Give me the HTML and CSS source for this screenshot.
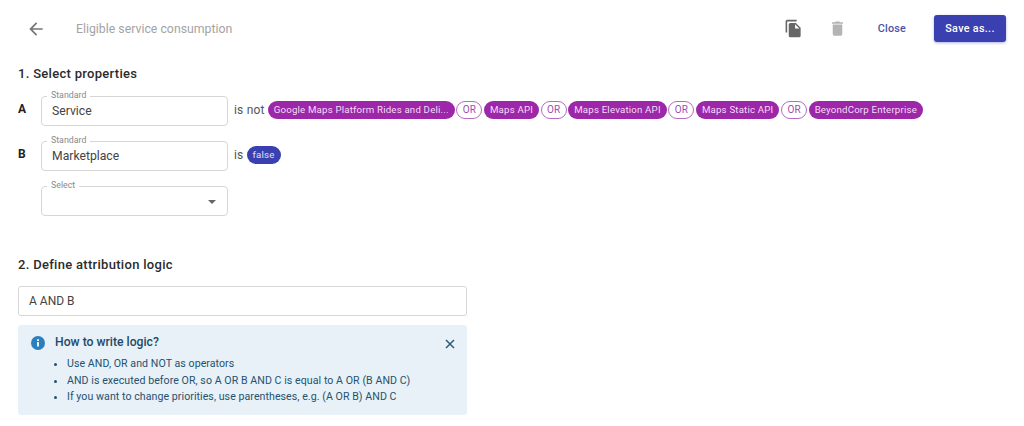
FILE: index.html
```html
<!DOCTYPE html>
<html lang="en">
<head>
<meta charset="utf-8">
<title>Eligible service consumption</title>
<link rel="stylesheet" href="styles.css">
</head>
<body>
<header class="top">
  <svg class="back" width="24" height="24" viewBox="0 0 24 24"><path d="M20 11H7.830l5.590-5.590L12 4l-8 8 8 8 1.410-1.410L7.830 13H20z"/></svg>
  <span class="title">Eligible service consumption</span>
  <svg class="ico-copy" width="24" height="24" viewBox="0 0 24 24"><path d="M16 1H4a2 2 0 0 0-2 2v14h2V3h12zm-1 4 6 6v10a2 2 0 0 1-2 2H8a2 2 0 0 1-2-2V7a2 2 0 0 1 2-2zm-1 7h5.500L14 6.500z"/></svg>
  <svg class="ico-trash" width="24" height="24" viewBox="0 0 24 24"><path d="M6 19a2 2 0 0 0 2 2h8a2 2 0 0 0 2-2V7H6zM19 4h-3.500l-1-1h-5l-1 1H5v2h14z"/></svg>
  <span class="close">Close</span>
  <span class="save">Save as...</span>
</header>
<main class="content">
  <h2 class="h1st">1. Select properties</h2>
  <div class="row">
    <b class="letter">A</b>
    <div class="field"><span class="lab">Standard</span>Service</div>
    <span class="op">is not</span>
    <div class="chips">
      <span class="chip">Google Maps Platform Rides and Deli...</span><span class="or">OR</span>
      <span class="chip">Maps API</span><span class="or">OR</span>
      <span class="chip">Maps Elevation API</span><span class="or">OR</span>
      <span class="chip">Maps Static API</span><span class="or">OR</span>
      <span class="chip">BeyondCorp Enterprise</span>
    </div>
  </div>
  <div class="row">
    <b class="letter">B</b>
    <div class="field"><span class="lab">Standard</span>Marketplace</div>
    <span class="op">is</span>
    <span class="chip blue">false</span>
  </div>
  <div class="row">
    <b class="letter"></b>
    <div class="field"><span class="lab">Select</span><span class="caret"></span></div>
  </div>
  <h2 class="h2nd">2. Define attribution logic</h2>
  <div class="logic">A AND B</div>
  <section class="info">
    <svg class="i" width="16" height="16" viewBox="0 0 16 16"><circle cx="8" cy="8" r="7"/><path class="i-w" d="M7.100 7h1.800v4.500H7.100zM7.100 4.200h1.800V6H7.100z"/></svg>
    <div class="info-body">
      <div class="info-title">How to write logic?</div>
      <ul>
        <li>Use AND, OR and NOT as operators</li>
        <li>AND is executed before OR, so A OR B AND C is equal to A OR (B AND C)</li>
        <li>If you want to change priorities, use parentheses, e.g. (A OR B) AND C</li>
      </ul>
    </div>
    <svg class="x" width="12" height="12" viewBox="0 0 12 12"><path d="M2 2l8 8M10 2l-8 8"/></svg>
  </section>
</main>
</body>
</html>
```
FILE: styles.css
```css
* { box-sizing: border-box; }
html, body { margin: 0; height: 426px; overflow: hidden; background: #fff; }
body { font-family: Roboto, sans-serif; color: #333; }

.top { display: flex; align-items: center; height: 27px; margin-top: 15px; padding: 0 18px 0 26px; }
.back { fill: #757575; flex: none; width: 20px; height: 20px; }
.title { font-size: 12.300px; color: #a3a3a3; margin-left: 30px; flex: 1; }
.ico-copy { fill: #666; width: 19px; height: 19px; margin-right: 25px; }
.ico-trash { fill: #b4b4b4; width: 19px; height: 19px; margin-right: 31px; }
.close { font-size: 10.800px; font-weight: 500; color: #4a54a8; margin-right: 28px; letter-spacing: .2px; }
.save { display: flex; align-items: center; justify-content: center; width: 72px; height: 27px; background: #3a40b0; color: #fff; border-radius: 3px; font-size: 10.800px; font-weight: 500; letter-spacing: .3px; box-shadow: 0 1px 3px rgba(58,64,176,.4); }

.content { padding: 0 18px; }
h2 { margin: 0; font-size: 13px; font-weight: 500; color: #2b2b2b; line-height: 16px; letter-spacing: .3px; }
.h1st { margin-top: 24px; margin-bottom: 14px; }
.h2nd { margin-top: 41px; margin-bottom: 13px; }

.row { display: flex; align-items: center; height: 30px; margin-bottom: 15px; }
.letter { width: 23px; margin-bottom: 4px; font-size: 12px; font-weight: 700; color: #222; }
.field { position: relative; width: 187px; height: 30px; flex: none; border: 1px solid #d6d6d6; border-radius: 4px; padding: 0 10px; font-size: 12.200px; line-height: 28px; color: #444; }
.lab { position: absolute; left: 5px; top: -7px; padding: 0 4px; background: #fff; font-size: 8.800px; line-height: 10px; color: #8a8a8a; }
.caret { position: absolute; right: 11px; top: 13px; border: 4px solid transparent; border-top: 4px solid #666; border-bottom: 0; }
.op { margin: 0 3px 3px 6px; font-size: 12px; letter-spacing: .2px; color: #555; }
.chips { display: flex; align-items: center; gap: .6px; margin-bottom: 3px; }
.chip { display: inline-flex; align-items: center; height: 18px; padding: 0 6px; border-radius: 9px; background: #9c27a8; color: #f5dcf7; font-size: 9.700px; letter-spacing: .18px; white-space: nowrap; }
.chip.blue { background: #3a40b0; color: #dfe1f7; margin-bottom: 3px; }
.or { display: inline-flex; align-items: center; justify-content: center; width: 26px; height: 18px; margin: 0 1px; border: 1px solid #b56cc0; border-radius: 10px; color: #a24bb0; font-size: 10px; }

.logic { width: 449px; height: 30px; border: 1px solid #d6d6d6; border-radius: 3px; padding: 0 10px; font-size: 12px; line-height: 28px; color: #444; }
.info { display: flex; width: 449px; height: 90px; margin-top: 9px; padding: 10px 11px 0 12px; background: #e8f0f8; border-radius: 3px; color: #24526e; }
.i { fill: #2a7fbe; flex: none; margin-right: 9px; }
.i-w { fill: #fff; }
.info-body { flex: 1; }
.info-title { font-size: 12.200px; font-weight: 500; line-height: 15px; color: #1f4a66; }
ul { margin: 6px 0 0; padding: 0 0 0 12px; font-size: 10.600px; line-height: 16.700px; letter-spacing: .06px; }
.x { stroke: #2e5a78; stroke-width: 1.500; fill: none; flex: none; margin-top: 3px; }
```
